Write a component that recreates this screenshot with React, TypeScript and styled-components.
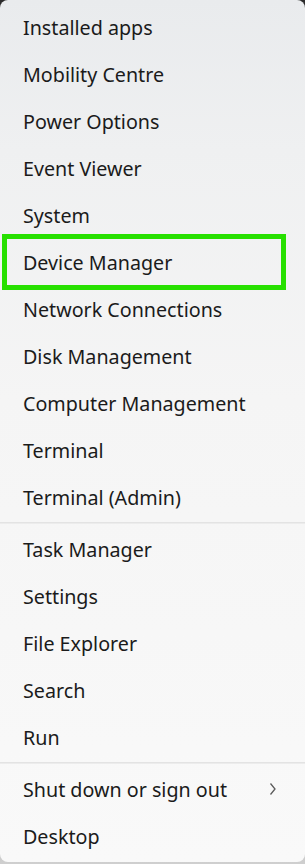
import React from "react";
import styled, { createGlobalStyle } from "styled-components";

const Global = createGlobalStyle`
  html, body { margin: 0; padding: 0; }
  body {
    width: 305px;
    height: 864px;
    overflow: hidden;
    background: linear-gradient(to bottom, #2b2b2b 0px, #3a3a3a 40px, #bdbdbd 820px, #cfcfcf 864px);
    font-family: "Noto Sans", "Open Sans", sans-serif;
  }
`;

const Panel = styled.div`
  box-sizing: border-box;
  width: 305px;
  height: 862px;
  border-radius: 8px;
  background: linear-gradient(to bottom, #e9ebed 0px, #eff0f1 150px, #f5f5f5 400px, #f9f9f9 864px);
  padding: 3.5px 0 0 0;
  display: flex;
  flex-direction: column;
`;

const Group = styled.div`
  display: flex;
  flex-direction: column;
`;

const Divider = styled.div`
  height: 1px;
  margin: 1px 0 2px 0;
  background: #e3e3e3;
  border-bottom: 1px solid #ececec;
`;

const Row = styled.div<{ $highlight?: boolean }>`
  position: relative;
  height: 47px;
  display: flex;
  align-items: center;
  padding-left: 23px;
  padding-right: 28px;
  font-size: 19.7px;
  color: #1b1b1b;

  ${(p) =>
    p.$highlight &&
    `
    &::after {
      content: "";
      position: absolute;
      left: 2px;
      top: -4.5px;
      width: 284px;
      height: 56px;
      box-sizing: border-box;
      border: 5.5px solid #27e000;
    }
  `}
`;

const Label = styled.span`
  flex: 1;
`;

const Chevron = styled.svg`
  width: 8px;
  height: 14px;
`;

const group1 = [
  "Installed apps",
  "Mobility Centre",
  "Power Options",
  "Event Viewer",
  "System",
  "Device Manager",
  "Network Connections",
  "Disk Management",
  "Computer Management",
  "Terminal",
  "Terminal (Admin)",
];
const group2 = ["Task Manager", "Settings", "File Explorer", "Search", "Run"];

export default function App() {
  return (
    <>
      <Global />
      <Panel>
        <Group>
          {group1.map((t) => (
            <Row key={t} $highlight={t === "Device Manager"}>
              <Label>{t}</Label>
            </Row>
          ))}
        </Group>
        <Divider />
        <Group>
          {group2.map((t) => (
            <Row key={t}>
              <Label>{t}</Label>
            </Row>
          ))}
        </Group>
        <Divider />
        <Group>
          <Row>
            <Label>Shut down or sign out</Label>
            <Chevron viewBox="0 0 8 14">
              <path d="M1.5 1.5 L6 7 L1.5 12.5" fill="none" stroke="#5a5a5a" strokeWidth="1.3" />
            </Chevron>
          </Row>
          <Row>
            <Label>Desktop</Label>
          </Row>
        </Group>
      </Panel>
    </>
  );
}
